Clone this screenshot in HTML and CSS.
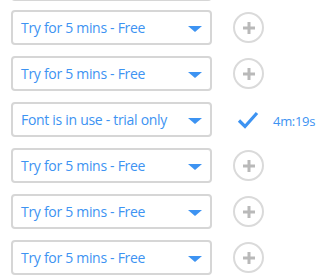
FILE: index.html
```html
<!DOCTYPE html>
<html>
<head>
<meta charset="utf-8">
<link rel="stylesheet" href="styles.css">
</head>
<body>
<div class="list">
  <div class="row partial">
    <div class="select"></div>
  </div>
  <div class="row">
    <div class="select"><span class="label">Try for 5 mins - Free</span><span class="caret"></span></div>
    <div class="add"><svg width="14" height="14" viewBox="0 0 14 14"><path d="M7 1v12M1 7h12" stroke="#b9b9b9" stroke-width="3"/></svg></div>
  </div>
  <div class="row">
    <div class="select"><span class="label">Try for 5 mins - Free</span><span class="caret"></span></div>
    <div class="add"><svg width="14" height="14" viewBox="0 0 14 14"><path d="M7 1v12M1 7h12" stroke="#b9b9b9" stroke-width="3"/></svg></div>
  </div>
  <div class="row">
    <div class="select"><span class="label">Font is in use - trial only</span><span class="caret"></span></div>
    <div class="active">
      <svg class="check" width="22" height="18" viewBox="0 0 22 18"><path d="M2 9.5l6 6L20 2" fill="none" stroke="#3d93f2" stroke-width="3.2" stroke-linejoin="miter"/></svg>
      <span class="timer">4m:19s</span>
    </div>
  </div>
  <div class="row">
    <div class="select"><span class="label">Try for 5 mins - Free</span><span class="caret"></span></div>
    <div class="add"><svg width="14" height="14" viewBox="0 0 14 14"><path d="M7 1v12M1 7h12" stroke="#b9b9b9" stroke-width="3"/></svg></div>
  </div>
  <div class="row">
    <div class="select"><span class="label">Try for 5 mins - Free</span><span class="caret"></span></div>
    <div class="add"><svg width="14" height="14" viewBox="0 0 14 14"><path d="M7 1v12M1 7h12" stroke="#b9b9b9" stroke-width="3"/></svg></div>
  </div>
  <div class="row">
    <div class="select"><span class="label">Try for 5 mins - Free</span><span class="caret"></span></div>
    <div class="add"><svg width="14" height="14" viewBox="0 0 14 14"><path d="M7 1v12M1 7h12" stroke="#b9b9b9" stroke-width="3"/></svg></div>
  </div>
</div>
</body>
</html>
```
FILE: styles.css
```css
html, body {
  margin: 0;
  padding: 0;
  background: #ffffff;
  overflow: hidden;
}
body {
  font-family: "Open Sans", "Noto Sans", sans-serif;
}
.list {
  display: flex;
  flex-direction: column;
  gap: 11px;
  margin-top: -34px;
  padding-left: 11px;
}
.row {
  display: flex;
  align-items: center;
  height: 35px;
}
.row.partial {
  margin-bottom: -2px;
}
.select {
  box-sizing: border-box;
  width: 201px;
  height: 35px;
  border: 2px solid #d6d6d6;
  border-radius: 4px;
  display: flex;
  align-items: center;
  justify-content: space-between;
  padding: 0 8px 0 8px;
}
.label {
  color: #3d93f2;
  font-size: 14px;
  letter-spacing: -0.3px;
}
.caret {
  width: 0;
  height: 0;
  border-left: 7px solid transparent;
  border-right: 7px solid transparent;
  border-top: 6px solid #3d93f2;
  margin-top: 2px;
}
.add {
  box-sizing: border-box;
  width: 31px;
  height: 31px;
  margin-left: 21px;
  border: 2px solid #dadada;
  border-radius: 50%;
  display: flex;
  align-items: center;
  justify-content: center;
}
.add svg { display: block; }
.active {
  display: flex;
  align-items: center;
  margin-left: 25px;
}
.check { display: block; }
.timer {
  color: #3d93f2;
  font-size: 13px;
  margin-left: 14px;
  margin-top: 2px;
  letter-spacing: -0.3px;
}
```
